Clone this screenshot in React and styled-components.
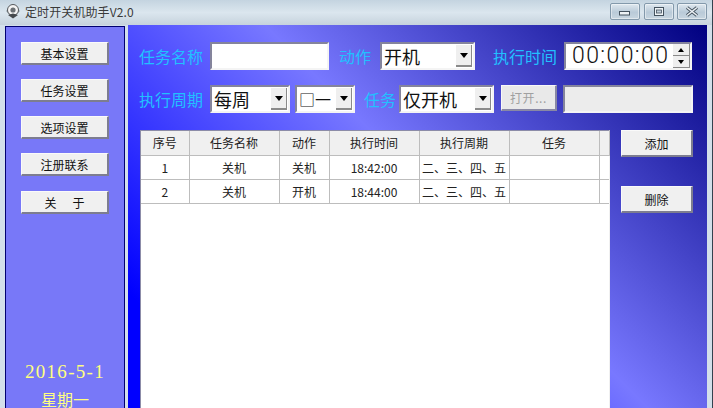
import React from "react";
import styled, { createGlobalStyle } from "styled-components";

const Global = createGlobalStyle`
  html, body { margin: 0; padding: 0; background: #d5e0ea; }
  * { box-sizing: border-box; }
`;
const CJK = `"Noto Sans CJK SC", "Liberation Sans", sans-serif`;

const Win = styled.div`
  width: 713px; height: 408px; overflow: hidden; display: flex; flex-direction: column;
  background: #d3dfea; font-family: ${CJK}; border-right: 1px solid #33424f;
`;
const TitleBar = styled.div`
  height: 25px; flex: none; display: flex; align-items: flex-start; padding: 3px 5px 0 5px;
  background: linear-gradient(180deg, #c4d4e0 0%, #dbe6ee 50%, #c6d3dd 100%);
`;
const TitleIcon = styled.svg` width: 16px; height: 16px; flex: none; margin-top: 0; `;
const TitleText = styled.div`
  margin-left: 4px; font-size: 12px; line-height: 18px; color: #3a3a3a; flex: 1; letter-spacing: 0.1px;
`;
const WinBtn = styled.div`
  width: 30px; height: 17px; margin-left: ${p => p.$left}px; display: flex; align-items: center; justify-content: center;
  border: 1px solid #8399ab; border-radius: 2px; background: linear-gradient(180deg, #dfe8ef, #b9cad8 55%, #c8d6e0);
  box-shadow: inset 0 0 0 1px rgba(255,255,255,.45);
`;
const Body = styled.div` flex: 1; min-height: 0; display: flex; padding: 0 5px; gap: 3px; `;
const Sidebar = styled.div`
  width: 120px; flex: none; margin-top: 1px; border: 1px solid #000070; border-bottom: 0; background: #7878f8;
  display: flex; flex-direction: column; align-items: flex-start; padding: 15px 0 0 15px; gap: 14px;
`;
const Btn = styled.div`
  display: flex; align-items: center; justify-content: center; white-space: pre;
  width: ${p => p.$w}px; height: ${p => p.$h || 23}px; flex: none; font-size: 12px; color: #111;
  background: #f0f0f0; border: 1px solid #fafafa; border-right: 2px solid #7d7d90; border-bottom: 2px solid #7d7d90;
  margin-top: ${p => p.$top || 0}px;
`;
const DateBlock = styled.div`
  margin-top: auto; margin-left: -15px; width: 118px; text-align: center; color: #ffff80;
`;
const DateLine = styled.div`
  font-family: "Liberation Serif", serif; font-size: 19px; line-height: 22px; letter-spacing: 1.3px; margin-bottom: 7px;
`;
const WeekLine = styled.div` font-size: 16px; line-height: 18px; `;
const Main = styled.div`
  flex: 1; min-width: 0; display: flex; flex-direction: column; padding: 17px 0 0 11px;
  background: linear-gradient(45deg, #0000ff 12%, #7878ff 54%, #000080 100%);
`;
const Row = styled.div`
  display: flex; align-items: center; height: 28px; flex: none; margin-bottom: 15px;
`;
const Label = styled.div`
  width: ${p => p.$w}px; margin-left: ${p => p.$left || 0}px; flex: none; font-size: 16px; line-height: 20px;
  color: #22c0ff; white-space: nowrap;
`;
const TextBox = styled.div`
  width: ${p => p.$w}px; height: 28px; margin-left: ${p => p.$left || 0}px; flex: none;
  background: ${p => p.$off ? "#ececec" : "#fff"};
  border: 2px solid; border-color: #84849c #f4f4f4 #f4f4f4 #84849c;
`;
const Select = styled.div`
  width: ${p => p.$w}px; height: 28px; margin-left: ${p => p.$left || 0}px; flex: none; display: flex; align-items: center;
  background: #fff; border: 2px solid; border-color: #84849c #f4f4f4 #f4f4f4 #84849c;
  padding-right: 1px;
`;
const SelectText = styled.div`
  flex: 1; font-size: ${p => p.$size || 18}px; line-height: 24px; color: #111; padding-left: 2px; white-space: nowrap; overflow: hidden;
`;
const Arrow = styled.div`
  width: 16px; height: 22px; flex: none; background: #efefef; display: flex; align-items: center; justify-content: center;
  border-right: 1px solid #8a8a8a; border-bottom: 2px solid #8a8a8a;
  &::after { content: ""; border: 4px solid transparent; border-top: 5px solid #000; border-bottom: 0; }
`;
const Spin = styled.div`
  width: 128px; height: 28px; margin-left: 7px; flex: none; display: flex; background: #fff;
  border: 2px solid; border-color: #84849c #f4f4f4 #f4f4f4 #84849c;
`;
const SpinValue = styled.div`
  flex: 1; padding-left: 6px; font-family: Roboto, "Liberation Sans", sans-serif; font-weight: 300; font-size: 23px; line-height: 24px;
  letter-spacing: 1.4px; color: #111; white-space: nowrap;
`;
const SpinBtns = styled.div` width: 17px; flex: none; display: flex; flex-direction: column; `;
const SpinBtn = styled.div`
  flex: 1; background: #efefef; display: flex; align-items: center; justify-content: center;
  border-right: 1px solid #8a8a8a; border-bottom: 1px solid #8a8a8a;
  &::after { content: ""; border: 3px solid transparent;
    ${p => p.$up ? "border-bottom: 4px solid #000; border-top: 0;" : "border-top: 4px solid #000; border-bottom: 0;"} }
`;
const OpenBtn = styled.div`
  width: 56px; height: 26px; margin-left: 7px; margin-bottom: 2px; flex: none; display: flex; align-items: center; justify-content: center;
  background: #e9e9e9; border: 1px solid #f8f8f8; border-right: 2px solid #8888a4; border-bottom: 2px solid #8888a4;
  font-size: 12px; color: #a0a0a0; letter-spacing: 0.6px;
`;
const Content = styled.div`
  flex: 1; min-height: 0; display: flex; margin: 2px 0 0 1px; gap: 11px;
`;
const Panel = styled.div`
  width: 470px; height: 300px; flex: none; background: #fff; border-top: 1px solid #8c8ca8; border-left: 1px solid #8c8ca8;
  border-right: 1px solid #f0f0f0;
`;
const Grid = styled.table`
  border-collapse: collapse; table-layout: fixed; width: 468px; font-size: 12px; color: #222;
`;
const Head = styled.th`
  width: ${p => p.$w}px; height: 24px; padding: 0; font-weight: 400; background: #f0f0f0; text-align: center;
  border-right: 1px solid #bdbdbd; border-bottom: 1px solid #bdbdbd;
`;
const Cell = styled.td`
  height: 24px; padding: 0; text-align: center; white-space: nowrap; overflow: hidden;
  border-right: 1px solid #bdbdbd; border-bottom: 1px solid #bdbdbd;
  &:last-child { border-right: 0; }
`;
const Actions = styled.div` display: flex; flex-direction: column; margin-top: 0; `;

const cols = [["序号", 48], ["任务名称", 90], ["动作", 50], ["执行时间", 90], ["执行周期", 90], ["任务", 90], ["", 10]];
const rows = [
  ["1", "关机", "关机", "18:42:00"],
  ["2", "关机", "开机", "18:44:00"],
];

export default function App() {
  return (
    <Win>
      <Global />
      <TitleBar>
        <TitleIcon viewBox="0 0 16 16">
          <path d="M1 8 L8 1 L15 8 L8 15 Z" fill="#9aa8ae" />
          <circle cx="8" cy="7" r="5.5" fill="#f4f4f4" stroke="#55585c" />
          <circle cx="8" cy="7" r="2.6" fill="#6b7074" />
          <path d="M3 12 L8 15.5 L13 12 L8 10.5 Z" fill="#44484c" />
        </TitleIcon>
        <TitleText>定时开关机助手V2.0</TitleText>
        <WinBtn $left={0}>
          <svg width="14" height="8" viewBox="0 0 14 8"><rect x="1.5" y="3.5" width="10" height="3.5" fill="#eef3f6" stroke="#44525e" /></svg>
        </WinBtn>
        <WinBtn $left={4}>
          <svg width="12" height="11" viewBox="0 0 12 11"><rect x="1.5" y="1.5" width="9" height="8" fill="#eef3f6" stroke="#44525e" /><rect x="3.5" y="4" width="5" height="3" fill="#c0ced9" stroke="#44525e" strokeWidth=".8" /></svg>
        </WinBtn>
        <WinBtn $left={3}>
          <svg width="14" height="11" viewBox="0 0 14 11"><path d="M2 1.5 L12 9.5 M12 1.5 L2 9.5" stroke="#44525e" strokeWidth="3.4" /><path d="M2 1.5 L12 9.5 M12 1.5 L2 9.5" stroke="#eef3f6" strokeWidth="1.6" /></svg>
        </WinBtn>
      </TitleBar>
      <Body>
        <Sidebar>
          <Btn $w={88}>基本设置</Btn>
          <Btn $w={88}>任务设置</Btn>
          <Btn $w={88}>选项设置</Btn>
          <Btn $w={88}>注册联系</Btn>
          <Btn $w={88} $top={1}>{"关      于"}</Btn>
          <DateBlock>
            <DateLine>2016-5-1</DateLine>
            <WeekLine>星期一</WeekLine>
          </DateBlock>
        </Sidebar>
        <Main>
          <Row>
            <Label $w={64}>任务名称</Label>
            <TextBox $w={119} $left={7} />
            <Label $w={32} $left={10}>动作</Label>
            <Select $w={95} $left={9}><SelectText>开机</SelectText><Arrow /></Select>
            <Label $w={64} $left={18}>执行时间</Label>
            <Spin>
              <SpinValue>00:00:00</SpinValue>
              <SpinBtns><SpinBtn $up /><SpinBtn /></SpinBtns>
            </Spin>
          </Row>
          <Row>
            <Label $w={64}>执行周期</Label>
            <Select $w={80} $left={7}><SelectText>每周</SelectText><Arrow /></Select>
            <Select $w={60} $left={5}><SelectText $size={16}>□一</SelectText><Arrow /></Select>
            <Label $w={32} $left={9}>任务</Label>
            <Select $w={95} $left={3}><SelectText>仅开机</SelectText><Arrow /></Select>
            <OpenBtn>打开...</OpenBtn>
            <TextBox $w={130} $left={6} $off />
          </Row>
          <Content>
            <Panel>
              <Grid>
                <thead>
                  <tr>{cols.map(([t, w], i) => <Head key={i} $w={w}>{t}</Head>)}</tr>
                </thead>
                <tbody>
                  {rows.map(r => (
                    <tr key={r[0]}>
                      {r.map((c, i) => <Cell key={i}>{c}</Cell>)}
                      <Cell>二、三、四、五</Cell>
                      <Cell />
                      <Cell />
                    </tr>
                  ))}
                </tbody>
              </Grid>
            </Panel>
            <Actions>
              <Btn $w={72} $h={27}>添加</Btn>
              <Btn $w={72} $h={27} $top={29}>删除</Btn>
            </Actions>
          </Content>
        </Main>
      </Body>
    </Win>
  );
}
